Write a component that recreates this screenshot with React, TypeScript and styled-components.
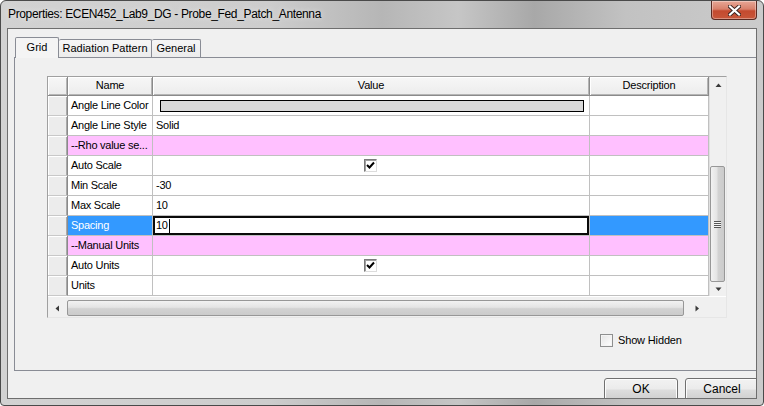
import React from "react";
import styled, { createGlobalStyle, css } from "styled-components";

const Global = createGlobalStyle`
  html, body { margin: 0; padding: 0; background: #ffffff; }
  body { font-family: "Liberation Sans", Arial, sans-serif; }
  * { box-sizing: border-box; }
`;

const Window = styled.div`
  width: 764px;
  height: 406px;
  border: 1px solid #4a4a4a;
  border-radius: 6px 6px 4px 4px;
  background: linear-gradient(
    90deg,
    #d2d2d2 0%,
    #cdcdcd 35%,
    #b6b6b6 50%,
    #c6c6c6 60%,
    #a8a8a8 70%,
    #c2c2c2 82%,
    #cbcbcb 100%
  );
  display: flex;
  flex-direction: column;
  overflow: hidden;
`;

const TitleBar = styled.div`
  height: 27px;
  flex: none;
  display: flex;
  justify-content: space-between;
  align-items: flex-start;
  padding: 0 6px 0 7px;
`;

const Title = styled.div`
  font-size: 12px;
  letter-spacing: -0.35px;
  line-height: 26px;
  color: #000;
  text-shadow: 0 0 6px rgba(255, 255, 255, 0.7);
`;

const CloseButton = styled.div`
  width: 46px;
  height: 19px;
  border: 1px solid #5b2a22;
  border-top: none;
  border-radius: 0 0 4px 4px;
  background: linear-gradient(180deg, #e7a796 0%, #d8806b 45%, #c44a2f 55%, #c8563a 100%);
  display: flex;
  align-items: center;
  justify-content: center;
  box-shadow: inset 0 0 0 1px rgba(255, 255, 255, 0.35);
`;

const Client = styled.div`
  flex: none;
  height: 371px;
  margin: 0 6px;
  border: 1px solid #6e6e6e;
  background: #f0f0f0;
  display: flex;
  flex-direction: column;
  padding-left: 6px;
  overflow: hidden;
`;

const TabStrip = styled.div`
  display: flex;
  align-items: flex-end;
  height: 21px;
  margin-top: 8px;
  padding-left: 1px;
  position: relative;
  z-index: 2;
  margin-bottom: -1px;
`;

const Tab = styled.div<{ $active?: boolean; $w: number }>`
  width: ${(p) => p.$w}px;
  font-size: 11px;
  color: #000;
  border: 1px solid #898c95;
  border-bottom: none;
  border-radius: 2px 2px 0 0;
  display: flex;
  justify-content: center;
  white-space: nowrap;
  ${(p) =>
    p.$active
      ? css`
          height: 21px;
          padding-top: 2px;
          line-height: 14px;
          background: #f4f4f4;
        `
      : css`
          height: 18px;
          line-height: 17px;
          background: linear-gradient(180deg, #f6f6f6 0%, #ececec 100%);
          margin-bottom: 1px;
          border-left: none;
        `}
`;

const Panel = styled.div`
  height: 314px;
  flex: none;
  border: 1px solid #898c95;
  border-right: none;
  background: #f0f0f0;
  padding: 18px 0 0 32px;
  display: flex;
  flex-direction: column;
`;

const GridBox = styled.div`
  width: 680px;
  height: 242px;
  border: 1px solid;
  border-color: #a0a0a0 #e6e6e6 #e6e6e6 #a0a0a0;
  background: #f0f0f0;
  display: flex;
  flex-direction: column;
`;

const Body = styled.div`
  display: flex;
  height: 219px;
`;

const Table = styled.div`
  display: grid;
  grid-template-columns: 20px 85px 437px 119px;
  grid-template-rows: 19px repeat(10, 20px);
  background: #ffffff;
`;

const HeadCell = styled.div`
  background: linear-gradient(180deg, #f7f7f7, #ececec);
  border-right: 1px solid #8a8a8a;
  border-bottom: 1px solid #8a8a8a;
  box-shadow: inset 1px 1px #ffffff, inset -1px -1px #b5b5b5;
  font-size: 11px;
  letter-spacing: -0.2px;
  line-height: 17px;
  text-align: center;
  color: #000;
  white-space: nowrap;
  overflow: hidden;
`;

const RowHead = styled.div`
  background: #ececec;
  border-right: 1px solid #8a8a8a;
  border-bottom: 1px solid #c8c8c8;
  box-shadow: inset 1px 1px #ffffff, inset -1px 0 #a9a9a9;
`;

type Tone = "plain" | "pink" | "sel";

const toneBg: Record<Tone, string> = {
  plain: "#ffffff",
  pink: "#ffc0ff",
  sel: "#3399ff",
};

const Cell = styled.div<{ $tone: Tone; $center?: boolean; $edit?: boolean }>`
  background: ${(p) => (p.$edit ? "#ffffff" : toneBg[p.$tone])};
  color: ${(p) => (p.$tone === "sel" && !p.$edit ? "#ffffff" : "#000000")};
  border-right: 1px solid #c0c0c0;
  border-bottom: 1px solid #c0c0c0;
  font-size: 11px;
  letter-spacing: -0.25px;
  line-height: 19px;
  padding: 0 3px;
  white-space: nowrap;
  overflow: hidden;
  display: flex;
  align-items: center;
  justify-content: ${(p) => (p.$center ? "center" : "flex-start")};
  ${(p) =>
    p.$edit &&
    css`
      box-shadow: inset 0 0 0 2px #0a0a0a;
    `}
`;

const ColorBar = styled.div`
  height: 12px;
  margin: 0 2px 0 4px;
  flex: 1;
  border: 1px solid #000;
  background: #d9d9d9;
`;

const Caret = styled.span`
  display: inline-block;
  width: 1px;
  height: 14px;
  background: #000;
  margin-left: 1px;
`;

const CheckBox = styled.div`
  width: 13px;
  height: 13px;
  border: 1px solid;
  border-color: #7a7a7a #dcdcdc #dcdcdc #7a7a7a;
  box-shadow: inset 1px 1px #a0a0a0;
  background: #ffffff;
  display: flex;
  align-items: center;
  justify-content: center;
  margin-left: -1px;
`;

const VScroll = styled.div`
  width: 17px;
  display: flex;
  flex-direction: column;
  background: #f0f0f0;
  border-left: 1px solid #e0e0e0;
`;

const ArrowBtn = styled.div<{ $h?: number; $w?: number }>`
  flex: none;
  ${(p) => (p.$h ? `height: ${p.$h}px;` : "")}
  ${(p) => (p.$w ? `width: ${p.$w}px;` : "")}
  display: flex;
  align-items: center;
  justify-content: center;
`;

const Track = styled.div<{ $size: number }>`
  flex: none;
  height: ${(p) => p.$size}px;
`;

const VThumb = styled.div`
  flex: none;
  height: 116px;
  width: 15px;
  border: 1px solid #979797;
  border-radius: 2px;
  background: linear-gradient(90deg, #f2f2f2 0%, #e4e4e4 45%, #d2d2d2 55%, #cbcbcb 100%);
  display: flex;
  align-items: center;
  justify-content: center;
`;

const Grip = styled.div`
  width: 7px;
  height: 7px;
  background: repeating-linear-gradient(180deg, #555 0 1px, #f4f4f4 1px 2px);
`;

const HScroll = styled.div`
  height: 21px;
  display: flex;
  align-items: flex-end;
  padding-bottom: 1px;
  background: #f0f0f0;
  border-top: 1px solid #ffffff;
`;

const HThumb = styled.div`
  flex: none;
  width: 617px;
  height: 16px;
  border: 1px solid #979797;
  border-radius: 2px;
  background: linear-gradient(180deg, #f2f2f2 0%, #e4e4e4 45%, #d2d2d2 55%, #cbcbcb 100%);
`;

const Corner = styled.div`
  flex: none;
  width: 16px;
  height: 100%;
  background: #f0f0f0;
`;

const ShowHiddenRow = styled.div`
  display: flex;
  align-items: center;
  gap: 5px;
  margin: 15px 0 0 553px;
  height: 14px;
  font-size: 11px;
  letter-spacing: -0.15px;
  color: #000;
`;

const PlainBox = styled.div`
  width: 13px;
  height: 13px;
  border: 1px solid #8e8f8f;
  background: linear-gradient(135deg, #e4e4e4, #ffffff);
  box-shadow: inset 0 0 0 1px #f4f4f4;
`;

const ButtonRow = styled.div`
  display: flex;
  gap: 7px;
  margin: 7px 0 0 590px;
`;

const Button = styled.div`
  flex: none;
  width: 74px;
  height: 23px;
  border: 1px solid #707070;
  border-radius: 3px;
  background: linear-gradient(180deg, #f2f2f2 0%, #ebebeb 48%, #dddddd 52%, #cfcfcf 100%);
  box-shadow: inset 0 0 0 1px #fcfcfc;
  font-size: 12px;
  line-height: 20px;
  text-align: center;
  color: #000;
`;

const Check = () => (
  <svg width="9" height="9" viewBox="0 0 9 9">
    <path d="M1 4 L3.5 6.5 L8 1.5" fill="none" stroke="#000" strokeWidth="2" />
  </svg>
);

const Tri = ({ dir }: { dir: "up" | "down" | "left" | "right" }) => {
  const d = {
    up: "M0.5 4 L3.5 0.5 L6.5 4 Z",
    down: "M0.5 0.5 L6.5 0.5 L3.5 4 Z",
    left: "M4 0.5 L4 6.5 L0.5 3.5 Z",
    right: "M0.5 0.5 L0.5 6.5 L4 3.5 Z",
  }[dir];
  const vert = dir === "up" || dir === "down";
  return (
    <svg width={vert ? 7 : 5} height={vert ? 5 : 7} viewBox={vert ? "0 0 7 5" : "0 0 5 7"}>
      <path d={d} fill="#3a3a3a" />
    </svg>
  );
};

type Val =
  | { kind: "none" }
  | { kind: "text"; text: string }
  | { kind: "color" }
  | { kind: "check" }
  | { kind: "edit"; text: string };

interface Row {
  name: string;
  tone: Tone;
  value: Val;
}

const rows: Row[] = [
  { name: "Angle Line Color", tone: "plain", value: { kind: "color" } },
  { name: "Angle Line Style", tone: "plain", value: { kind: "text", text: "Solid" } },
  { name: "--Rho value se...", tone: "pink", value: { kind: "none" } },
  { name: "Auto Scale", tone: "plain", value: { kind: "check" } },
  { name: "Min Scale", tone: "plain", value: { kind: "text", text: "-30" } },
  { name: "Max Scale", tone: "plain", value: { kind: "text", text: "10" } },
  { name: "Spacing", tone: "sel", value: { kind: "edit", text: "10" } },
  { name: "--Manual Units", tone: "pink", value: { kind: "none" } },
  { name: "Auto Units", tone: "plain", value: { kind: "check" } },
  { name: "Units", tone: "plain", value: { kind: "none" } },
];

const ValueCell = ({ row }: { row: Row }) => {
  const v = row.value;
  if (v.kind === "color")
    return (
      <Cell $tone={row.tone}>
        <ColorBar />
      </Cell>
    );
  if (v.kind === "check")
    return (
      <Cell $tone={row.tone} $center>
        <CheckBox>
          <Check />
        </CheckBox>
      </Cell>
    );
  if (v.kind === "edit")
    return (
      <Cell $tone={row.tone} $edit>
        {v.text}
        <Caret />
      </Cell>
    );
  if (v.kind === "text") return <Cell $tone={row.tone}>{v.text}</Cell>;
  return <Cell $tone={row.tone} />;
};

export default function App() {
  return (
    <>
      <Global />
      <Window>
        <TitleBar>
          <Title>Properties: ECEN452_Lab9_DG - Probe_Fed_Patch_Antenna</Title>
          <CloseButton>
            <svg width="13" height="11" viewBox="0 0 13 11">
              <path d="M2 1.5 L11 9.5 M11 1.5 L2 9.5" stroke="#3b2420" strokeWidth="4" strokeLinecap="square" />
              <path d="M2 1.5 L11 9.5 M11 1.5 L2 9.5" stroke="#ffffff" strokeWidth="2.2" strokeLinecap="square" />
            </svg>
          </CloseButton>
        </TitleBar>
        <Client>
          <TabStrip>
            <Tab $active $w={44}>Grid</Tab>
            <Tab $w={93}>Radiation Pattern</Tab>
            <Tab $w={49}>General</Tab>
          </TabStrip>
          <Panel>
            <GridBox>
              <Body>
                <Table>
                  <HeadCell />
                  <HeadCell>Name</HeadCell>
                  <HeadCell>Value</HeadCell>
                  <HeadCell>Description</HeadCell>
                  {rows.map((r) => (
                    <React.Fragment key={r.name}>
                      <RowHead />
                      <Cell $tone={r.tone}>{r.name}</Cell>
                      <ValueCell row={r} />
                      <Cell $tone={r.tone} />
                    </React.Fragment>
                  ))}
                </Table>
                <VScroll>
                  <ArrowBtn $h={17}>
                    <Tri dir="up" />
                  </ArrowBtn>
                  <Track $size={72} />
                  <VThumb>
                    <Grip />
                  </VThumb>
                  <ArrowBtn $h={14}>
                    <Tri dir="down" />
                  </ArrowBtn>
                </VScroll>
              </Body>
              <HScroll>
                <ArrowBtn $w={19} $h={16}>
                  <Tri dir="left" />
                </ArrowBtn>
                <HThumb />
                <ArrowBtn $w={26} $h={16}>
                  <Tri dir="right" />
                </ArrowBtn>
                <Corner />
              </HScroll>
            </GridBox>
            <ShowHiddenRow>
              <PlainBox />
              <span>Show Hidden</span>
            </ShowHiddenRow>
          </Panel>
          <ButtonRow>
            <Button>OK</Button>
            <Button>Cancel</Button>
          </ButtonRow>
        </Client>
      </Window>
    </>
  );
}
